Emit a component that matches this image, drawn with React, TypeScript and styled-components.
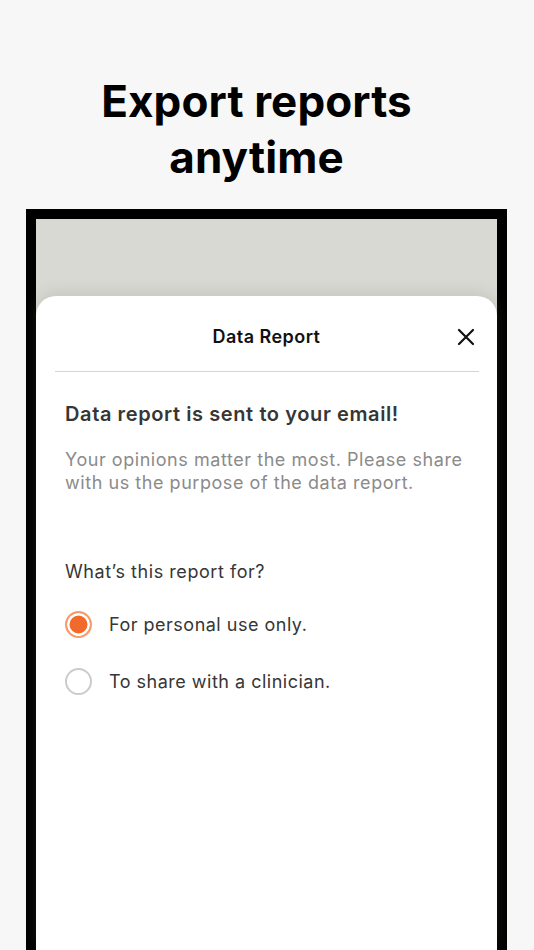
import { FC } from 'react';
import styled, { createGlobalStyle } from 'styled-components';

const orange = '#f26a2b';
const orangeLight = '#f59d70';
const ink = '#111111';
const textDark = '#363636';
const textMuted = '#8b8b8b';

const GlobalStyle = createGlobalStyle`
	html, body {
		margin: 0;
		padding: 0;
		background: #f7f7f7;
	}
	body {
		font-family: Inter, 'Noto Sans', 'Liberation Sans', sans-serif;
		-webkit-font-smoothing: antialiased;
	}
	* {
		box-sizing: border-box;
	}
`;

const Page = styled.div`
	width: 534px;
	height: 950px;
	overflow: hidden;
	display: flex;
	flex-direction: column;
	background: #f7f7f7;
`;

const Headline = styled.h1`
	margin: 73px 0 0;
	padding-right: 21px;
	font-size: 44px;
	line-height: 56px;
	font-weight: 700;
	letter-spacing: 0.1px;
	color: #000;
	text-align: center;
`;

const PhoneFrame = styled.div`
	flex: 1;
	margin: 24px 27px 0 26px;
	border: 10px solid #000;
	border-bottom: none;
	background: #d8d9d3;
	padding-top: 77px;
	display: flex;
	flex-direction: column;
`;

const Sheet = styled.section`
	flex: 1;
	background: #fff;
	border-radius: 20px 20px 0 0;
	box-shadow: 0 -4px 14px rgba(120, 120, 100, 0.18);
	display: flex;
	flex-direction: column;
`;

const SheetHeader = styled.header`
	display: grid;
	grid-template-columns: 1fr auto 1fr;
	align-items: center;
	padding: 29px 22px 22px;
`;

const SheetTitle = styled.h2`
	grid-column: 2;
	margin: 0;
	font-size: 18px;
	line-height: 24px;
	font-weight: 600;
	letter-spacing: 0.45px;
	color: ${ink};
`;

const CloseButton = styled.button`
	grid-column: 3;
	justify-self: end;
	display: flex;
	padding: 0;
	border: none;
	background: none;
	cursor: pointer;
`;

const Divider = styled.hr`
	margin: 0 18px 0 19px;
	border: none;
	border-top: 1.5px solid #d4d4d4;
`;

const Content = styled.div`
	padding: 28px 29px 0;
	display: flex;
	flex-direction: column;
`;

const Heading = styled.h3`
	margin: 0;
	font-size: 20px;
	line-height: 28px;
	font-weight: 600;
	letter-spacing: 0.6px;
	color: ${textDark};
`;

const Lead = styled.p`
	margin: 20px 0 0;
	font-size: 18px;
	line-height: 23px;
	letter-spacing: 0.55px;
	color: ${textMuted};
`;

const Question = styled.p`
	margin: 66px 0 0;
	font-size: 18px;
	line-height: 24px;
	letter-spacing: 0.55px;
	color: ${textDark};
`;

const Options = styled.div`
	margin-top: 26px;
	display: flex;
	flex-direction: column;
	gap: 29px;
`;

const Option = styled.label`
	display: flex;
	align-items: center;
	gap: 17px;
	height: 28px;
	font-size: 18px;
	letter-spacing: 0.5px;
	color: ${textDark};
	cursor: pointer;
`;

const Radio = styled.span<{ $checked?: boolean }>`
	width: 27px;
	height: 27px;
	flex: none;
	border-radius: 50%;
	border: 2px solid ${(p) => (p.$checked ? orangeLight : '#cbcbcb')};
	background: ${(p) => (p.$checked ? orange : '#fff')};
	box-shadow: ${(p) => (p.$checked ? 'inset 0 0 0 2.5px #fff' : 'none')};
`;

const CloseIcon: FC = () => (
	<svg width="18" height="18" viewBox="0 0 18 18" fill="none">
		<path d="M2 2L16 16M16 2L2 16" stroke={ink} strokeWidth="2.2" strokeLinecap="round" />
	</svg>
);

const options = [
	{ label: 'For personal use only.', checked: true },
	{ label: 'To share with a clinician.', checked: false },
];

const App: FC = () => (
	<Page>
		<GlobalStyle />
		<Headline>
			Export reports
			<br />
			anytime
		</Headline>
		<PhoneFrame>
			<Sheet>
				<SheetHeader>
					<SheetTitle>Data Report</SheetTitle>
					<CloseButton aria-label="Close">
						<CloseIcon />
					</CloseButton>
				</SheetHeader>
				<Divider />
				<Content>
					<Heading>Data report is sent to your email!</Heading>
					<Lead>
						Your opinions matter the most. Please share
						<br />
						with us the purpose of the data report.
					</Lead>
					<Question>What’s this report for?</Question>
					<Options>
						{options.map((o) => (
							<Option key={o.label}>
								<Radio $checked={o.checked} />
								{o.label}
							</Option>
						))}
					</Options>
				</Content>
			</Sheet>
		</PhoneFrame>
	</Page>
);

export default App;
